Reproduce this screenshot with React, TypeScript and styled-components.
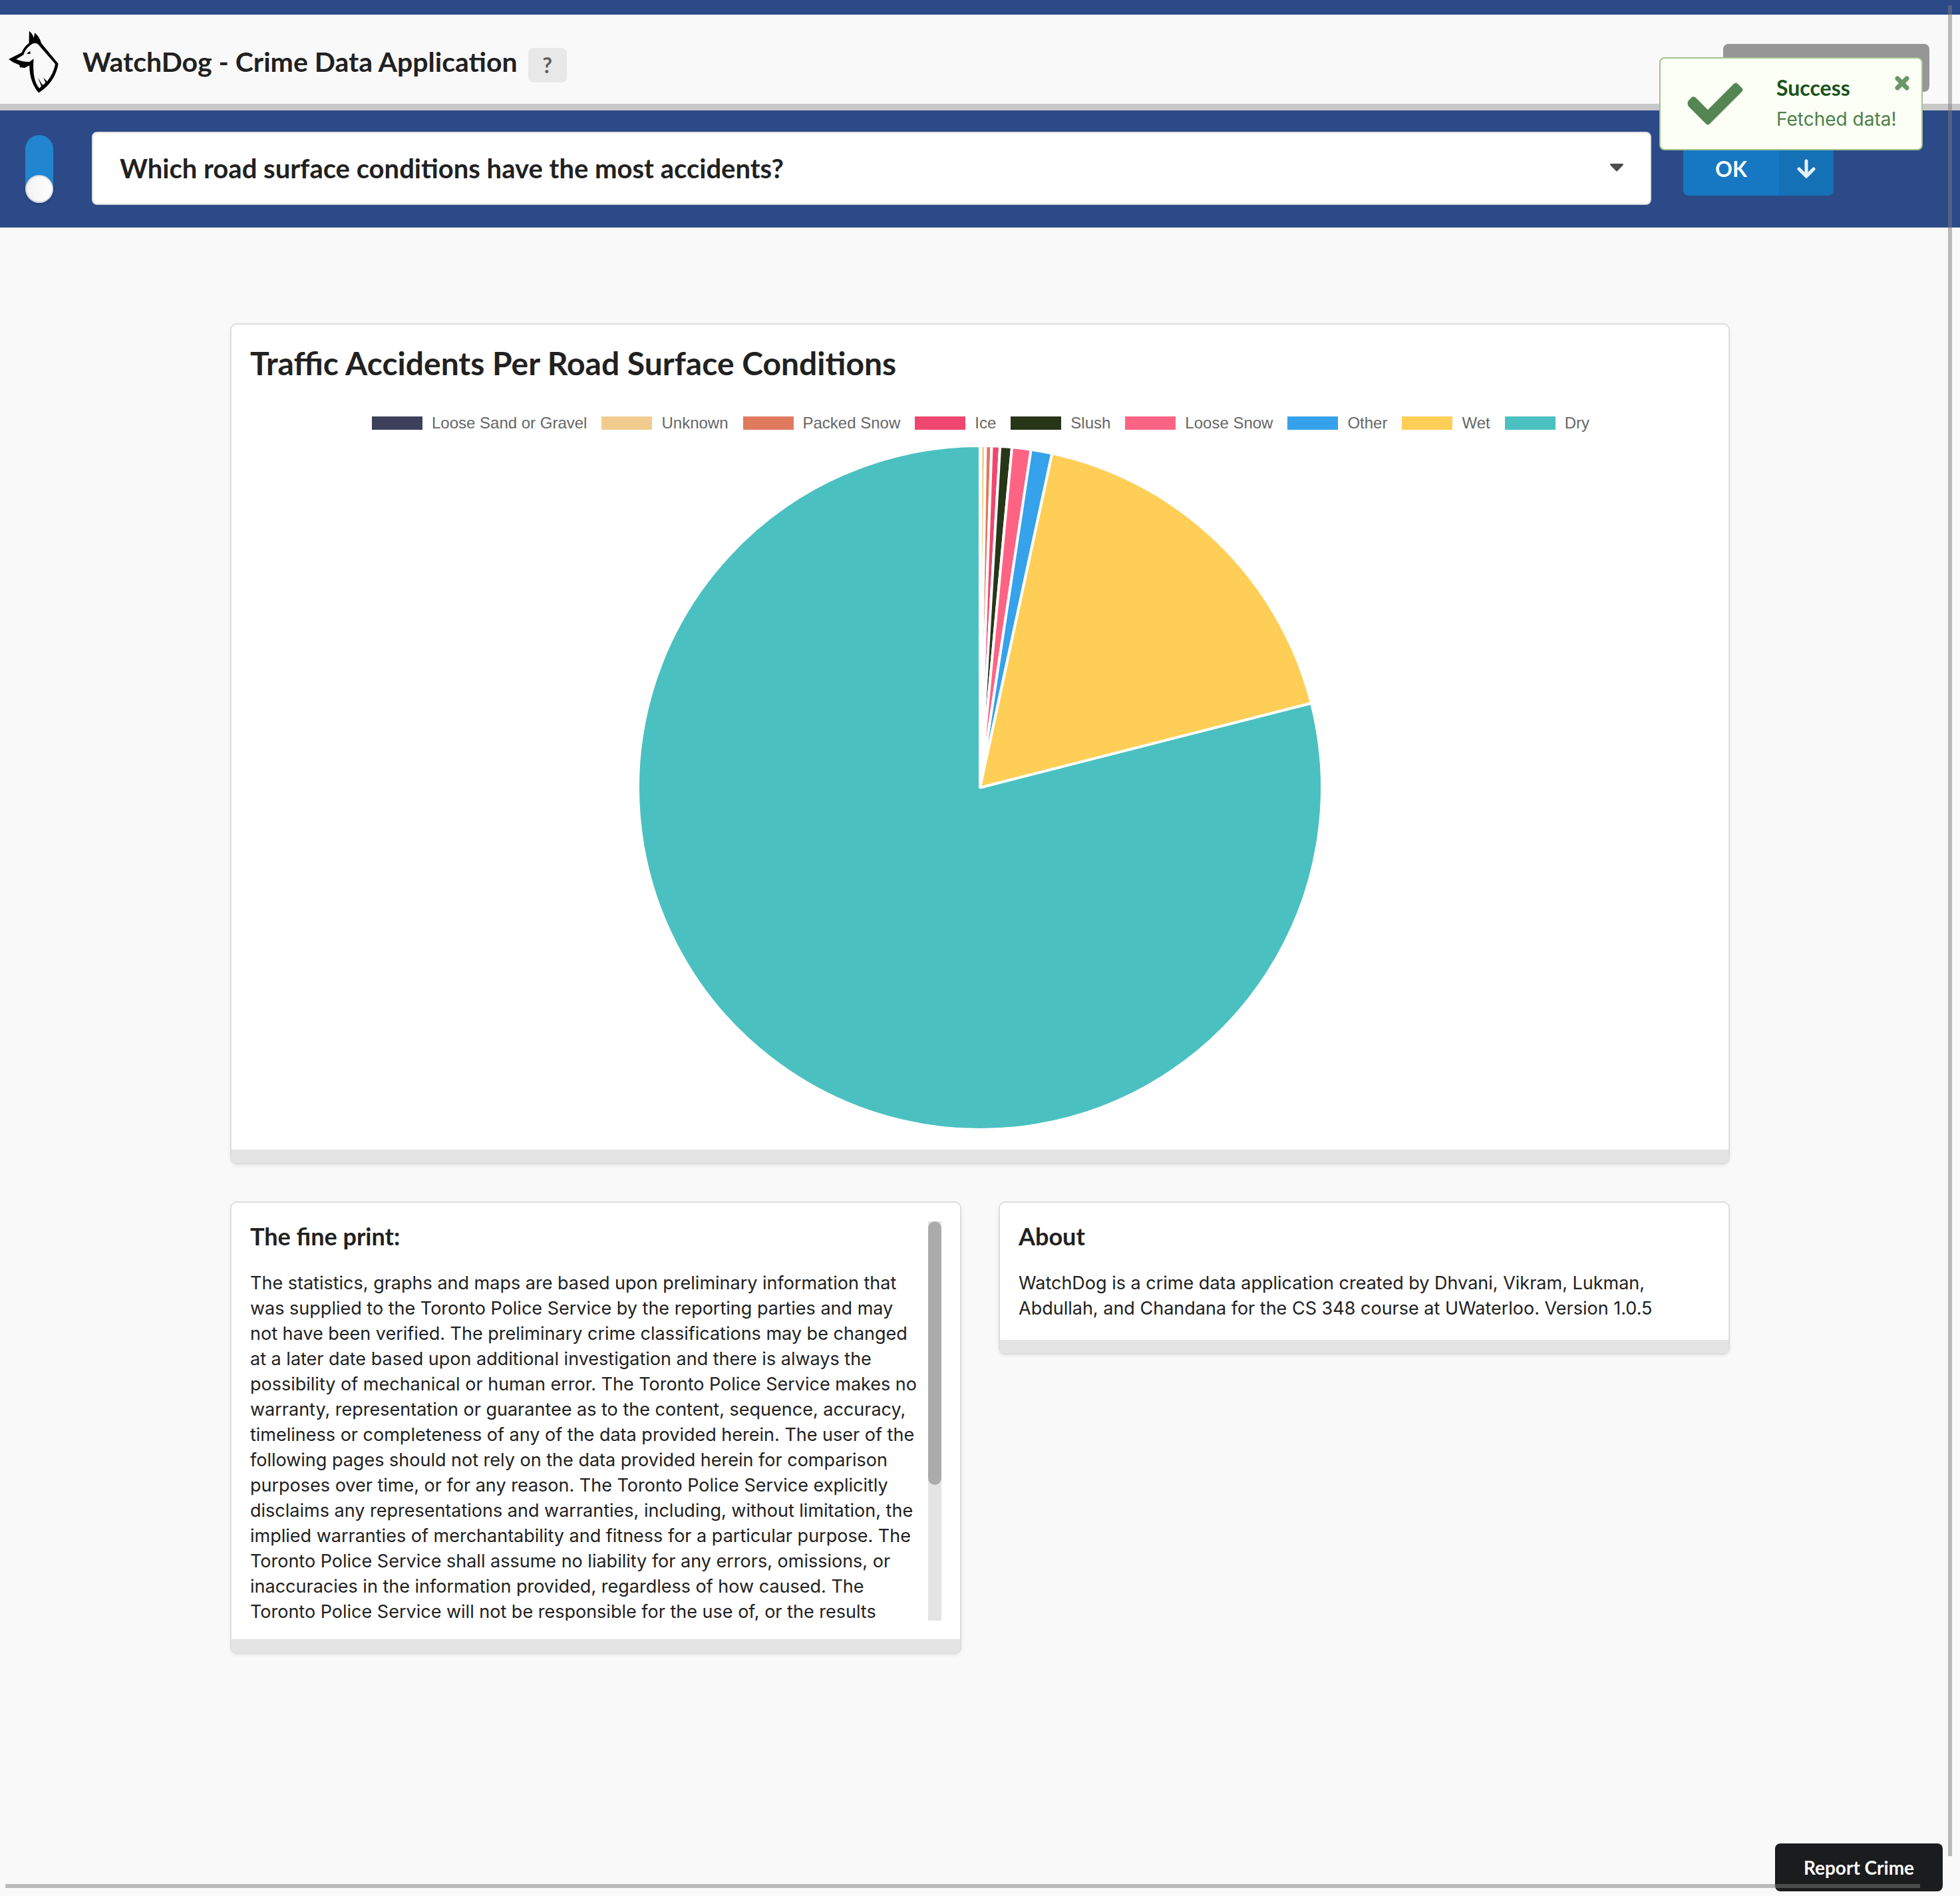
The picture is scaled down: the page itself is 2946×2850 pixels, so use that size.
import React from "react";
import styled, { createGlobalStyle } from "styled-components";

const heading = `"Lato", "Open Sans", sans-serif`;
const body = `"Inter", "Roboto", sans-serif`;

const GlobalStyle = createGlobalStyle`
  *, *::before, *::after { box-sizing: border-box; }
  body {
    margin: 0;
    min-height: 100vh;
    background: #f9f9f9;
    color: #212121;
    font-family: ${body};
    font-size: 27px;
    line-height: 38px;
  }
  button, select, input { font: inherit; margin: 0; }
`;

const Header = styled.header`
  display: flex;
  align-items: center;
  height: 166px;
  padding: 8px 46px 0 13px;
  border-top: 22px solid #2b4a87;
  border-bottom: 10px solid #c8c8c8;
`;

const Logo = styled.svg`
  width: 75px;
  height: 94px;
  margin-right: 36px;
`;

const AppTitle = styled.h1`
  margin: 0;
  font: 700 41px/48px ${heading};
`;

const Button = styled.button`
  display: flex;
  align-items: center;
  justify-content: center;
  border: 0;
  border-radius: 8px;
  font-family: ${heading};
  font-weight: 700;
`;

const HelpButton = styled(Button)`
  width: 58px;
  height: 52px;
  margin: 10px 0 0 16px;
  background: #e8e8e8;
  color: #606060;
  font-size: 32px;
`;

const AccountButton = styled(Button)`
  width: 310px;
  height: 72px;
  margin: 18px 0 0 auto;
  background: #969696;
`;

const Toolbar = styled.form`
  display: flex;
  align-items: center;
  height: 176px;
  padding: 0 190px 0 38px;
  background: #2b4a87;
`;

const Toggle = styled.input`
  appearance: none;
  display: flex;
  align-items: flex-end;
  width: 42px;
  height: 102px;
  border-radius: 21px;
  background: #2185d0;

  &::before {
    content: "";
    width: 42px;
    height: 42px;
    border-radius: 50%;
    background: linear-gradient(90deg, #f2f2f2, #fff);
    box-shadow: 0 2px 4px rgba(34, 36, 38, 0.15), inset 0 0 0 2px rgba(34, 36, 38, 0.15);
  }
`;

const SelectBox = styled.div`
  position: relative;
  flex: 1;
  margin: 0 48px 2px 58px;
`;

const Question = styled.select`
  appearance: none;
  display: block;
  width: 100%;
  height: 110px;
  padding: 0 100px 0 40px;
  border: 2px solid #dedede;
  border-radius: 8px;
  background: #fff;
  color: #212121;
  font: 700 40px/48px ${heading};
`;

const Caret = styled.svg`
  position: absolute;
  right: 42px;
  top: 48px;
  width: 20px;
  height: 12px;
  pointer-events: none;
`;

const ButtonGroup = styled.div`
  display: flex;
  height: 80px;
  border-radius: 8px;
  overflow: hidden;
`;

const OkButton = styled(Button)`
  width: 144px;
  border-radius: 0;
  background: #1678c2;
  color: #fff;
  font-size: 32px;
`;

const FetchButton = styled(OkButton)`
  width: 82px;
  background: #1471b6;
`;

const Main = styled.main`
  display: grid;
  grid-template-columns: 1fr 1fr;
  align-items: start;
  gap: 60px;
  max-width: 2250px;
  margin: 0 auto;
  padding: 146px 0 366px;
`;

const Card = styled.section<{ $wide?: boolean }>`
  grid-column: ${(p) => (p.$wide ? "1 / -1" : "auto")};
  padding: 28px 28px 48px;
  border-radius: 8px;
  background: linear-gradient(to top, #e4e4e4 20px, #fff 20px);
  box-shadow:
    0 0 0 2px #dedede,
    0 2px 6px 0 #d4d4d5;
`;

const ChartTitle = styled.h2`
  margin: 0 0 48px;
  font: 700 48px/60px ${heading};
`;

const CardTitle = styled.h3`
  margin: 0 0 30px;
  font: 700 36px/44px ${heading};
`;

const Paragraph = styled.p`
  margin: 0;
`;

const Legend = styled.ul`
  display: flex;
  flex-wrap: wrap;
  justify-content: center;
  gap: 20px;
  margin: 0 0 22px;
  padding: 0;
  list-style: none;
  color: #666;
  font: 24px/24px "Liberation Sans", Arial, sans-serif;
`;

const LegendItem = styled.li<{ $color: string }>`
  display: flex;
  gap: 12px;

  &::before {
    content: "";
    width: 80px;
    height: 24px;
    border: 2px solid #fff;
    background: ${(p) => p.$color};
  }
`;

const Pie = styled.svg`
  display: block;
  width: 1028px;
  max-width: 100%;
  margin: 0 auto 2px;
`;

const FinePrint = styled.div`
  display: flex;
  gap: 12px;
  height: 600px;
`;

const FinePrintText = styled.div`
  flex: 1;
  overflow-y: auto;
  scrollbar-width: none;
`;

const Track = styled.div`
  width: 20px;
  background: #e4e4e4;
`;

const Thumb = styled.div`
  height: 66%;
  border-radius: 10px;
  background: #ababab;
`;

const Toast = styled.aside`
  position: fixed;
  z-index: 2;
  top: 86px;
  right: 56px;
  display: flex;
  align-items: center;
  width: 396px;
  height: 140px;
  padding: 0 20px 0 40px;
  border: 2px solid #a3c293;
  border-radius: 8px;
  background: #fcfff5;
  color: #4b8049;
`;

const CheckIcon = styled.svg`
  width: 84px;
  height: 64px;
  margin-right: 50px;
`;

const ToastText = styled.div`
  padding-bottom: 2px;
  font-size: 28px;
`;

const ToastTitle = styled.h4`
  margin: 0 0 8px;
  color: #1a531b;
  font: 700 32px/40px ${heading};
`;

const CloseButton = styled.button`
  position: absolute;
  top: 26px;
  right: 18px;
  display: flex;
  padding: 0;
  border: 0;
  background: none;
`;

const ReportButton = styled(Button)`
  position: fixed;
  right: 26px;
  bottom: 7px;
  width: 252px;
  height: 72px;
  background: #1b1c1d;
  color: #fff;
  font-size: 28px;
`;

const PageScrollY = styled.div`
  position: fixed;
  z-index: 3;
  top: 8px;
  bottom: 60px;
  right: 12px;
  width: 6px;
  background: rgba(124, 124, 124, 0.5);
`;

const PageScrollX = styled.div`
  position: fixed;
  z-index: 3;
  left: 8px;
  right: 60px;
  bottom: 12px;
  height: 6px;
  background: rgba(124, 124, 124, 0.5);
`;

/* Each slice ends at the given angle, clockwise from the top, in degrees. */
const slices = [
  { label: "Loose Sand or Gravel", color: "#3d405b", end: 0.14 },
  { label: "Unknown", color: "#f2cc8f", end: 0.93 },
  { label: "Packed Snow", color: "#e07a5f", end: 1.96 },
  { label: "Ice", color: "#ef476f", end: 3.37 },
  { label: "Slush", color: "#283618", end: 5.37 },
  { label: "Loose Snow", color: "#ff6384", end: 8.59 },
  { label: "Other", color: "#36a2eb", end: 12.17 },
  { label: "Wet", color: "#ffce56", end: 75.7 },
  { label: "Dry", color: "#4bc0c0", end: 360 },
];

const CENTER = 514;
const RADIUS = 514;

const rim = (deg: number) => {
  const a = (deg * Math.PI) / 180;
  return `${CENTER + RADIUS * Math.sin(a)} ${CENTER - RADIUS * Math.cos(a)}`;
};

const slicePath = (start: number, end: number) =>
  `M${CENTER} ${CENTER}L${rim(start)}A${RADIUS} ${RADIUS} 0 ${end - start > 180 ? 1 : 0} 1 ${rim(end)}Z`;

export default function App() {
  return (
    <>
      <GlobalStyle />
      <Header>
        <Logo viewBox="39 51 226 282" aria-hidden="true">
          <path d="M39 180L98 150Q108 124 131 107L132 53Q147 64 153 84L157 60Q180 78 187 108L264 200Q250 284 175 332Q134 286 133 208L112 219L90 217L88 206L60 194Z" />
          <path
            fill="#f9f9f9"
            d="M73 180L106 160Q114 132 143 112Q158 104 172 112L250 202Q242 246 213 281L196 262L206 286L197 296L190 294L171 262L187 302L178 312Q145 276 152 178L133 192Q100 192 73 180Z"
          />
          <path d="M120 155L136 143L138 156Z" />
        </Logo>
        <AppTitle>WatchDog - Crime Data Application</AppTitle>
        <HelpButton aria-label="Help">?</HelpButton>
        <AccountButton aria-label="Account" />
      </Header>

      <Toolbar onSubmit={(e) => e.preventDefault()}>
        <Toggle type="checkbox" defaultChecked aria-label="Question mode" />
        <SelectBox>
          <Question aria-label="Question">
            <option>Which road surface conditions have the most accidents?</option>
          </Question>
          <Caret viewBox="0 0 20 12" aria-hidden="true">
            <path d="M1 0H19Q21 1 19 3L11 11Q10 12 9 11L1 3Q-1 1 1 0Z" fill="#4d4d4d" />
          </Caret>
        </SelectBox>
        <ButtonGroup>
          <OkButton type="submit">OK</OkButton>
          <FetchButton type="button" aria-label="Download">
            <svg width="28" height="30" viewBox="0 0 28 30" fill="none" stroke="#e8f1f8" strokeLinecap="round" strokeLinejoin="round">
              <path d="M14 3V25" strokeWidth="5" />
              <path d="M3 15L14 26L25 15" strokeWidth="5" />
            </svg>
          </FetchButton>
        </ButtonGroup>
      </Toolbar>

      <Main>
        <Card $wide>
          <ChartTitle>Traffic Accidents Per Road Surface Conditions</ChartTitle>
          <Legend>
            {slices.map((s) => (
              <LegendItem key={s.label} $color={s.color}>
                {s.label}
              </LegendItem>
            ))}
          </Legend>
          <Pie viewBox="0 0 1028 1028" role="img" aria-label="Traffic accidents by road surface condition">
            {slices.map((s, i) => (
              <path
                key={s.label}
                d={slicePath(i ? slices[i - 1].end : 0, Math.min(s.end, 359.99))}
                fill={s.color}
                stroke="#fff"
                strokeWidth="4"
                strokeLinejoin="bevel"
              />
            ))}
          </Pie>
        </Card>

        <Card>
          <FinePrint>
            <FinePrintText tabIndex={0}>
              <CardTitle>The fine print:</CardTitle>
              <Paragraph>
                The statistics, graphs and maps are based upon preliminary information that was supplied to the Toronto
                Police Service by the reporting parties and may not have been verified. The preliminary crime
                classifications may be changed at a later date based upon additional investigation and there is always
                the possibility of mechanical or human error. The Toronto Police Service makes no warranty,
                representation or guarantee as to the content, sequence, accuracy, timeliness or completeness of any of
                the data provided herein. The user of the following pages should not rely on the data provided herein
                for comparison purposes over time, or for any reason. The Toronto Police Service explicitly disclaims
                any representations and warranties, including, without limitation, the implied warranties of
                merchantability and fitness for a particular purpose. The Toronto Police Service shall assume no
                liability for any errors, omissions, or inaccuracies in the information provided, regardless of how
                caused. The Toronto Police Service will not be responsible for the use of, or the results
              </Paragraph>
            </FinePrintText>
            <Track>
              <Thumb />
            </Track>
          </FinePrint>
        </Card>

        <Card>
          <CardTitle>About</CardTitle>
          <Paragraph>
            WatchDog is a crime data application created by Dhvani, Vikram, Lukman, Abdullah, and Chandana for the CS
            348 course at UWaterloo. Version 1.0.5
          </Paragraph>
        </Card>
      </Main>

      <Toast role="status">
        <CheckIcon viewBox="0 0 84 64" aria-hidden="true">
          <path
            fill="#568554"
            d="M2 27L7 22Q10 20 13 23L31 41L70 2Q73 -1 76 2L82 8Q85 11 82 14L34 62Q31 65 28 62L2 36Q-1 31 2 27Z"
          />
        </CheckIcon>
        <ToastText>
          <ToastTitle>Success</ToastTitle>
          <Paragraph>Fetched data!</Paragraph>
        </ToastText>
        <CloseButton aria-label="Close">
          <svg width="22" height="22" viewBox="0 0 22 22" stroke="#6a9669" strokeWidth="7" strokeLinecap="round">
            <path d="M4 4L18 18M18 4L4 18" />
          </svg>
        </CloseButton>
      </Toast>

      <ReportButton>Report Crime</ReportButton>
      <PageScrollY />
      <PageScrollX />
    </>
  );
}
